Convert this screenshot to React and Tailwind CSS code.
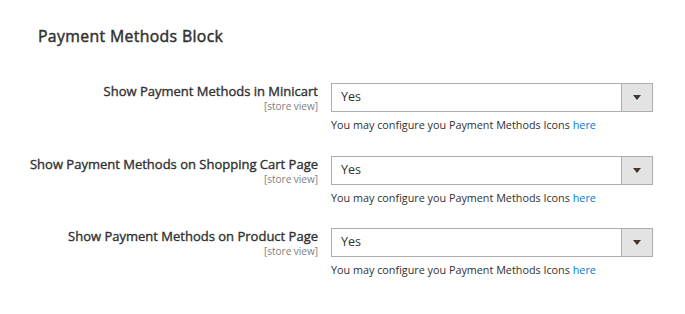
export default function App() {
  const rows = [
    "Show Payment Methods in Minicart",
    "Show Payment Methods on Shopping Cart Page",
    "Show Payment Methods on Product Page",
  ];
  return (
    <div className="w-[685px] h-[314px] bg-white text-[#303030]" style={{ fontFamily: '"Open Sans", sans-serif' }}>
      <div className="pl-[38px] pt-[26px]">
        <h2 className="text-[15.8px] font-normal leading-[20px] tracking-[0.35px] text-[#303030] [-webkit-text-stroke:0.45px_#303030]">Payment Methods Block</h2>
      </div>
      <div className="mt-[37px] flex flex-col gap-[22.5px]">
        {rows.map((r) => (
          <div key={r} className="flex">
            <div className="w-[318px] flex flex-col items-end pt-[1px]">
              <div className="text-[13px] font-normal leading-[15px] text-[#303030] [-webkit-text-stroke:0.35px_#303030]">{r}</div>
              <div className="mt-[1px] text-[10px] leading-[12px] text-[#808080]">[store view]</div>
            </div>
            <div className="ml-[13px] w-[322px] flex flex-col">
              <div className="h-[29px] border border-[#adadad] flex">
                <div className="flex-1 pl-[9px] flex items-center text-[12.5px] text-[#303030]">Yes</div>
                <div className="w-[31px] border-l border-[#adadad] bg-[#e3e3e3] flex items-center justify-center">
                  <svg width="8" height="5" viewBox="0 0 8 5"><path d="M0 0H8L4 5Z" fill="#41362f" /></svg>
                </div>
              </div>
              <div className="mt-[5px] text-[10.8px] leading-[16px] text-[#303030]">
                You may configure you Payment Methods Icons <span className="text-[#007bdb]">here</span>
              </div>
            </div>
          </div>
        ))}
      </div>
    </div>
  );
}
